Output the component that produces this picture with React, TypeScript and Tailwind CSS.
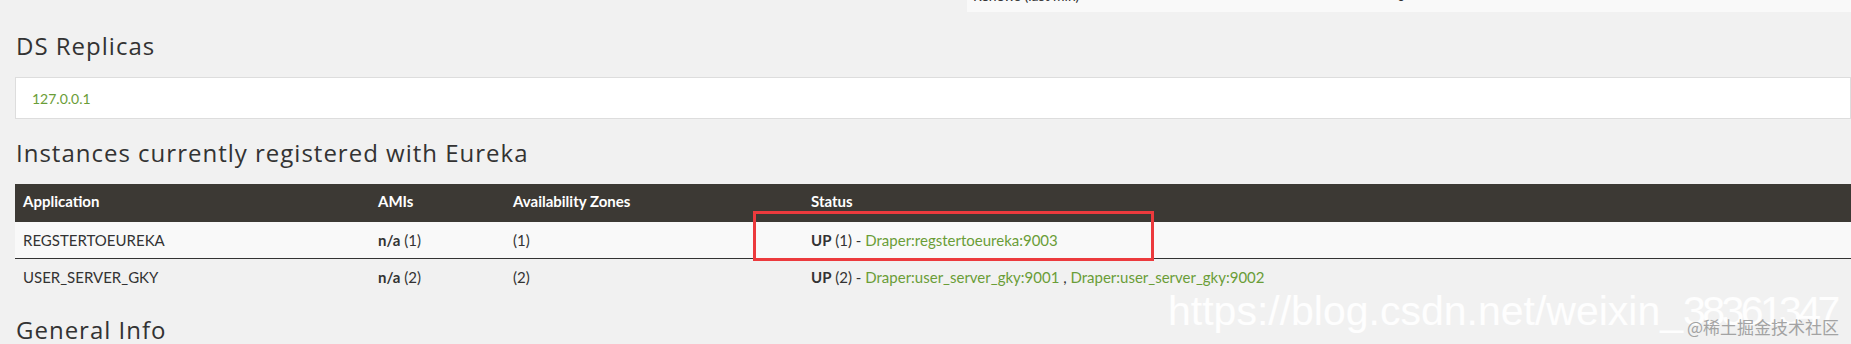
import React from "react";

const rows = [
  {
    app: "REGSTERTOEUREKA",
    amis: "(1)",
    zones: "(1)",
    count: "(1)",
    links: ["Draper:regstertoeureka:9003"],
  },
  {
    app: "USER_SERVER_GKY",
    amis: "(2)",
    zones: "(2)",
    count: "(2)",
    links: ["Draper:user_server_gky:9001", "Draper:user_server_gky:9002"],
  },
];

const heading =
  "font-['Open_Sans',sans-serif] text-[24px] leading-[28px] font-medium tracking-[1px] text-[#333]";

export default function App() {
  return (
    <div className="relative h-[344px] w-[1851px] overflow-hidden bg-[#f1f1f1] font-['Lato',sans-serif] text-[15px] text-[#333]">
      {/* bottom of the previous section's table, cut off at the top */}
      <div className="flex h-[12px] justify-end">
        <div className="flex h-[12px] w-[884px] overflow-hidden bg-[#f9f9f9] pl-[6px]">
          <div className="-mt-[11px] flex text-[14px] leading-[14px]">
            <span className="w-[424px]">Renews (last min)</span>
            <span>0</span>
          </div>
        </div>
      </div>

      <div className="pl-[15px]">
        <h1 className={`mt-[20px] pl-[1px] ${heading}`}>DS Replicas</h1>
        <div className="mt-[17px] flex h-[42px] items-center border border-[#dddddd] bg-white pl-[16px]">
          <a className="text-[14px] text-[#6a9d37]">127.0.0.1</a>
        </div>

        <h1 className={`mt-[20px] pl-[1px] ${heading}`}>Instances currently registered with Eureka</h1>

        <div className="mt-[17px] w-[2000px]">
          <div className="flex h-[38px] items-center bg-[#3c3934] pb-[3px] font-bold text-white">
            <div className="w-[355px] pl-[8px]">Application</div>
            <div className="w-[135px] pl-[8px]">AMIs</div>
            <div className="w-[298px] pl-[8px]">Availability Zones</div>
            <div className="pl-[8px]">Status</div>
          </div>
          {rows.map((r, i) => (
            <div
              key={r.app}
              className={`flex h-[37px] items-center ${i === 0 ? "border-b border-[#333] bg-[#f9f9f9]" : ""}`}
            >
              <div className="w-[355px] pl-[8px]">{r.app}</div>
              <div className="w-[135px] pl-[8px]">
                <b>n/a</b> {r.amis}
              </div>
              <div className="w-[298px] pl-[8px]">{r.zones}</div>
              <div className="pl-[8px]">
                <b>UP</b> {r.count} -{" "}
                {r.links.map((l, j) => (
                  <React.Fragment key={l}>
                    {j > 0 && " , "}
                    <a className="text-[#6a9d37]">{l}</a>
                  </React.Fragment>
                ))}
              </div>
            </div>
          ))}
        </div>

        <h1 className={`mt-[20px] pl-[1px] ${heading}`}>General Info</h1>
      </div>

      {/* screenshot annotation */}
      <div className="absolute left-[753px] top-[211px] h-[50px] w-[401px] border-[3px] border-[#ec3a3d]" />

      {/* watermarks */}
      <div className="pointer-events-none absolute left-[1168px] top-[291px] whitespace-nowrap font-['Liberation_Sans',Arial,sans-serif] text-[41px] leading-none text-white/90">
        https://blog.csdn.net/weixin_<span className="tracking-[-3.6px]">38361347</span>
      </div>
      <div className="pointer-events-none absolute left-[1687px] top-[317px] whitespace-nowrap font-['Noto_Sans_CJK_SC',sans-serif] text-[17px] leading-[20px] text-[#a3a3a3]">
        @稀土掘金技术社区
      </div>
    </div>
  );
}
